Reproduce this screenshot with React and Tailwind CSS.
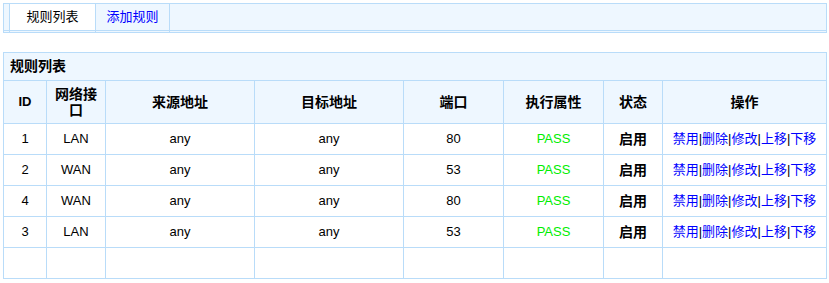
import { Fragment } from "react";

const rules = [
  { id: 1, iface: "LAN", src: "any", dst: "any", port: 80 },
  { id: 2, iface: "WAN", src: "any", dst: "any", port: 53 },
  { id: 4, iface: "WAN", src: "any", dst: "any", port: 80 },
  { id: 3, iface: "LAN", src: "any", dst: "any", port: 53 },
];

const headers = ["ID", "网络接口", "来源地址", "目标地址", "端口", "执行属性", "状态", "操作"];
const actions = ["禁用", "删除", "修改", "上移", "下移"];

function Segment({ className = "", children }) {
  return (
    <div className={`flex flex-col ${className}`}>
      <div className="h-[27px] flex items-center justify-center border-b border-[#b9dcf9]">{children}</div>
      <div className="h-px" />
    </div>
  );
}

export default function App() {
  const cell = "bg-white h-[30px] flex items-center justify-center";
  return (
    <div
      className="bg-white w-[829px] h-[283px] pt-[3px] pl-[3px] text-[13px] text-black"
      style={{ fontFamily: '"Liberation Sans", "Noto Sans CJK SC", sans-serif' }}
    >
      {/* TABS */}
      <div className="w-[824px] border border-[#b9dcf9] bg-[#eef7ff] flex">
        <Segment className="w-[6px] border-r border-[#b9dcf9]" />
        <div className="w-[86px] flex flex-col border-r border-[#b9dcf9]">
          <div className="h-[27px] bg-white flex items-center justify-center border-b border-[#b9dcf9]">规则列表</div>
          <div className="h-px" />
        </div>
        <Segment className="w-[74px] border-r border-[#b9dcf9]">
          <span className="text-[#0000ff]">添加规则</span>
        </Segment>
        <Segment className="flex-1" />
      </div>

      {/* TABLE */}
      <div className="mt-[19px] w-[824px] grid grid-cols-[42px_58px_148px_148px_99px_99px_58px_163px] gap-px p-px bg-[#b9dcf9]">
        <div className="col-span-8 h-[27px] bg-[#eef7ff] flex items-center pl-[6px] font-bold text-[14px]">规则列表</div>

        {headers.map((h) => (
          <div
            key={h}
            className={`h-[42px] bg-[#eef7ff] flex items-center justify-center text-center font-bold px-[4px] leading-[16px] ${h === "ID" ? "text-[13px]" : "text-[14px]"}`}
          >
            {h}
          </div>
        ))}

        {rules.map((r) => (
          <Fragment key={r.id}>
            <div className={cell}>{r.id}</div>
            <div className={cell}>{r.iface}</div>
            <div className={cell}>{r.src}</div>
            <div className={cell}>{r.dst}</div>
            <div className={cell}>{r.port}</div>
            <div className={`${cell} text-[#00ee00]`}>PASS</div>
            <div className={`${cell} font-bold text-[14px]`}>启用</div>
            <div className={cell}>
              {actions.map((a, i) => (
                <span key={a}>
                  {i > 0 && <span>|</span>}
                  <a href="#" className="text-[#0000ff]">{a}</a>
                </span>
              ))}
            </div>
          </Fragment>
        ))}

        {headers.map((h) => (
          <div key={`e${h}`} className={cell} />
        ))}
      </div>
    </div>
  );
}
